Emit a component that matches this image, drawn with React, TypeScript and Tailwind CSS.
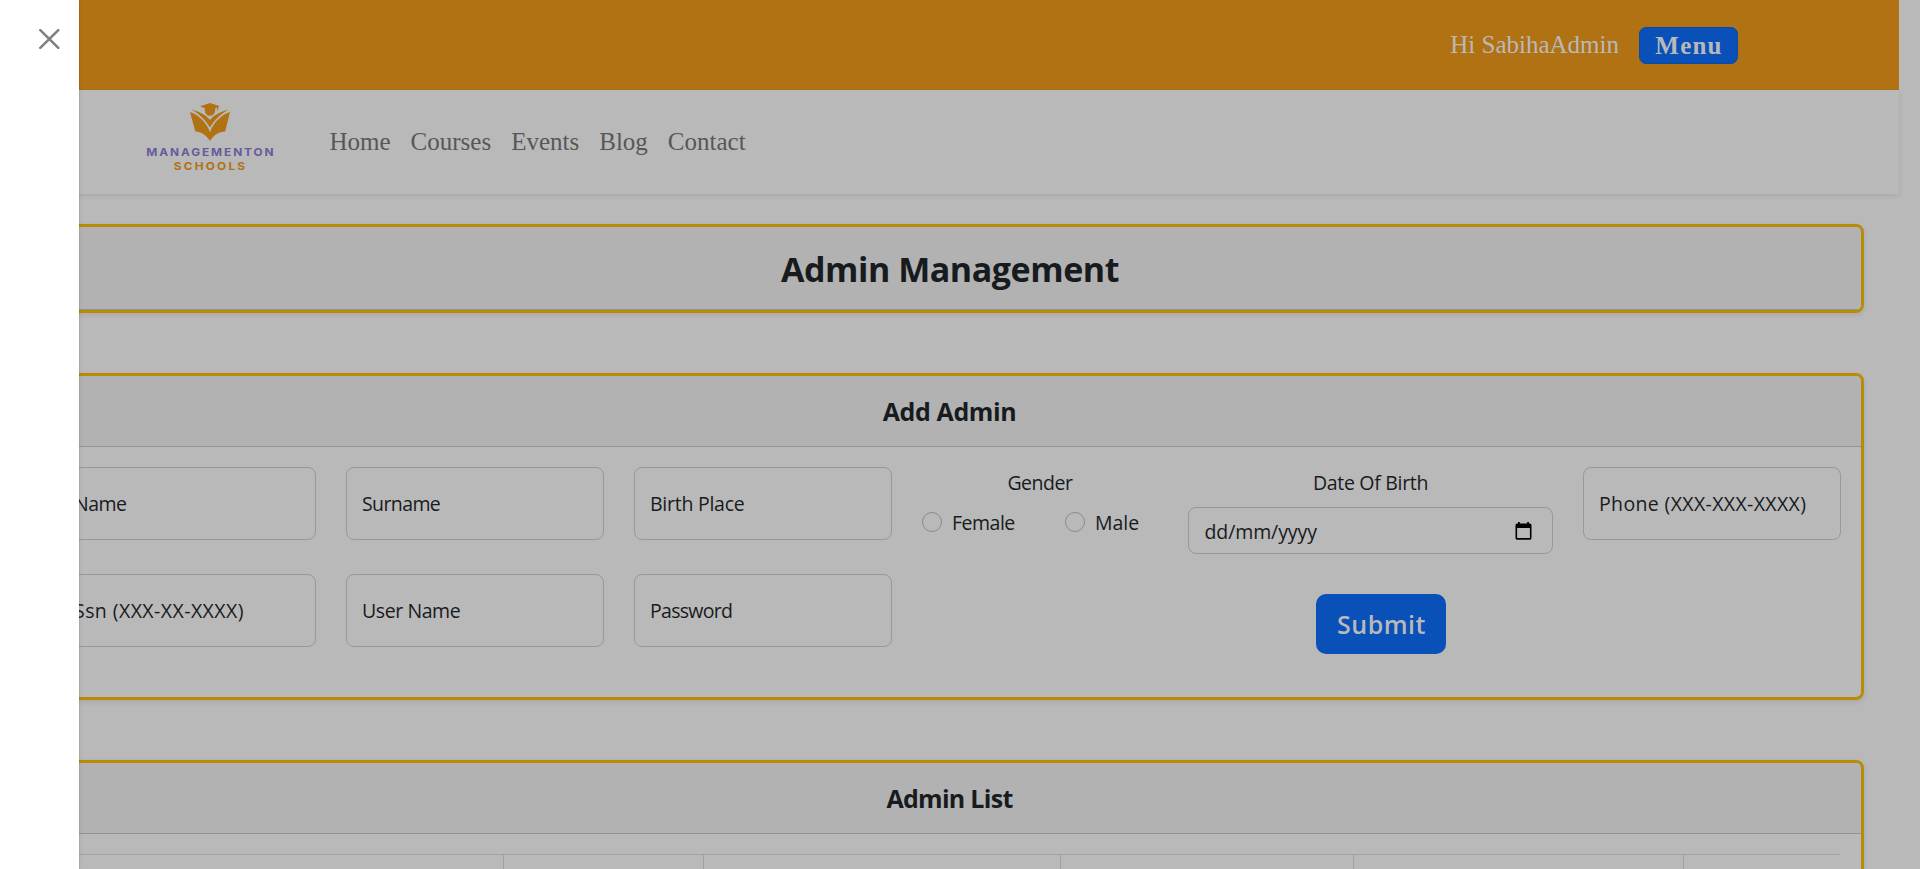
import type { ReactNode } from "react";

const NAV_LINKS = ["Home", "Courses", "Events", "Blog", "Contact"];

function Logo() {
  return (
    <div className="flex w-[140px] flex-col items-center pt-[13px] font-['Inter',sans-serif] text-[11px] leading-[14px] font-bold">
      <svg width="40" height="38" viewBox="0 0 40 38" className="mb-1" fill="#b17213">
        <path d="M20 0 L30 3.300 L28.200 4 V7.600 H27.200 V4.400 L25.200 5.200 V7.500 A5.200 5.200 0 0 1 14.800 7.500 V5.200 L10 3.300 Z" />
        <path d="M1.200 6.200 C9 8.500 15.500 11.500 20 17 C24.500 11.500 31 8.500 38.800 6.200 C31 11 24.500 16.500 20 24.500 C15.500 16.500 9 11 1.200 6.200 Z" />
        <path d="M0 9 C8 11.500 17 19.500 20 29.500 C23 19.500 32 11.500 40 9 L35.200 28.500 C29 28.500 24 32 20 38 C16 32 11 28.500 5.300 28.500 Z" />
      </svg>
      <span className="scale-x-[1.08] pl-[1px] tracking-[1.750px] whitespace-nowrap text-[#665b9b]">MANAGEMENTON</span>
      <span className="scale-x-[1.08] pl-[1.5px] tracking-[2px] whitespace-nowrap text-[#b17213]">SCHOOLS</span>
    </div>
  );
}

type CardProps = { title: string; titleClass: string; children?: ReactNode };

function Card({ title, titleClass, children }: CardProps) {
  return (
    <section className="overflow-hidden rounded-[8px] border-[3px] border-[#b98c05] shadow-[0_2px_5px_rgba(0,0,0,0.09)]">
      <h2 className={`flex items-center justify-center border-b border-[#929292] bg-[#b2b2b2] font-bold text-[#181b1e] ${titleClass}`}>
        {title}
      </h2>
      {children}
    </section>
  );
}

function Field({ label, spacing }: { label: string; spacing: string }) {
  return (
    <div className="flex h-[73px] items-center rounded-[8px] border border-[#959a9e] px-[15px] whitespace-nowrap">
      <span className={spacing}>{label}</span>
    </div>
  );
}

function Radio() {
  return <span className="mr-2.5 h-5 w-5 rounded-full border border-[#8a8a8a]" />;
}

function CalendarIcon() {
  return (
    <svg width="17" height="18" viewBox="0 0 17 18" fill="#000">
      <path
        fillRule="evenodd"
        d="M3 0 H4.800 V1.600 H12.200 V0 H14 V1.600 H15 A1.700 1.700 0 0 1 16.500 3.300 V16 A1.700 1.700 0 0 1 15 17.700 H2 A1.700 1.700 0 0 1 .5 16 V3.300 A1.700 1.700 0 0 1 2 1.600 H3 Z M2.100 6 V16.100 H14.900 V6 Z"
      />
    </svg>
  );
}

export default function App() {
  return (
    <div className="relative h-[869px] w-full overflow-hidden bg-[#b9b9b9] font-['Open_Sans','Noto_Sans',sans-serif] text-[19.5px] text-[#181b1e]">
      <div className="w-[1899px]">
        <div className="flex h-[90px] items-center justify-end gap-5 bg-[#b17213] pr-[161px] font-['Liberation_Serif',serif] text-[25px] text-[#b9b9b9]">
          <span>Hi SabihaAdmin</span>
          <button className="mt-px flex h-[37px] w-[99px] items-center justify-center rounded-[7px] border border-[#0d4aa3] bg-[#0a50b9] pl-px font-bold tracking-[1.2px]">
            Menu
          </button>
        </div>
        <nav className="flex h-[104px] bg-[#b9b9b9] pl-[140px] shadow-[0_2px_5px_rgba(0,0,0,0.09)]">
          <Logo />
          <div className="ml-[49.5px] flex items-center gap-5 font-['Liberation_Serif',serif] text-[25px] text-[#575757]">
            {NAV_LINKS.map((link) => (
              <a key={link}>{link}</a>
            ))}
          </div>
        </nav>

        <main className="flex flex-col pt-[30px] pr-[35px] pl-[35px]">
          <Card title="Admin Management" titleClass="h-[83px] pt-[3px] pl-px text-[34px] tracking-[-0.45px]" />
          <div className="h-[60px]" />
          <Card title="Add Admin" titleClass="h-[71px] pt-0.5 text-[25px] tracking-[-0.4px]">
            <div className="grid h-[250px] grid-cols-[258px_258px_258px_236px_365px_258px] grid-rows-[87px_87px] gap-x-[30px] gap-y-5 p-5">
              <Field label="Name" spacing="tracking-[-0.5px]" />
              <Field label="Surname" spacing="tracking-[-0.6px]" />
              <Field label="Birth Place" spacing="tracking-[-0.25px]" />
              <div>
                <div className="mb-[9px] h-[31px] text-center leading-[31px] tracking-[-0.45px]">Gender</div>
                <div className="flex h-[30px] items-center">
                  <div className="flex w-[143px] items-center tracking-[-0.5px]">
                    <Radio />
                    <span className="pt-0.5">Female</span>
                  </div>
                  <div className="flex items-center">
                    <Radio />
                    <span className="pt-0.5">Male</span>
                  </div>
                </div>
              </div>
              <div>
                <div className="mb-[9px] h-[31px] text-center leading-[31px] tracking-[-0.3px]">Date Of Birth</div>
                <div className="flex h-[47px] items-center justify-between rounded-[8px] border border-[#959a9e] pr-5 pl-[15.5px]">
                  <span className="pt-[3px] tracking-[-0.1px]">dd/mm/yyyy</span>
                  <CalendarIcon />
                </div>
              </div>
              <Field label="Phone (XXX-XXX-XXXX)" spacing="tracking-[0.36px]" />
              <Field label="Ssn (XXX-XX-XXXX)" spacing="tracking-[0.44px]" />
              <Field label="User Name" spacing="tracking-[-0.42px]" />
              <Field label="Password" spacing="tracking-[-0.7px]" />
              <div className="col-span-3 flex justify-center pt-5 pr-0.5">
                <button className="h-[60px] w-[130px] rounded-[10px] bg-[#0a50b9] pt-0.5 pl-0.5 text-[25px] font-semibold tracking-[0.5px] text-[#b9b9b9]">
                  Submit
                </button>
              </div>
            </div>
          </Card>
          <div className="h-[60px]" />
          <Card title="Admin List" titleClass="h-[71px] pt-0.5 text-[25px] tracking-[-0.7px]">
            <div className="h-[100px] py-5 pr-[21px] pl-5">
              <div className="grid h-full grid-cols-[446px_200px_357px_293px_330px_156px] border-t border-[#a0a3a6]">
                <div className="border-r border-[#a0a3a6]" />
                <div className="border-r border-[#a0a3a6]" />
                <div className="border-r border-[#a0a3a6]" />
                <div className="border-r border-[#a0a3a6]" />
                <div className="border-r border-[#a0a3a6]" />
                <div />
              </div>
            </div>
          </Card>
        </main>
      </div>

      <aside className="absolute top-0 left-0 h-full w-[80px] border-r border-black/5 bg-white bg-clip-padding shadow-[0_2px_4px_rgba(0,0,0,0.06)]">
        <button aria-label="Close" className="absolute top-[29px] left-[39px]">
          <svg width="21" height="20" viewBox="0 0 21 20" fill="none" stroke="#7f7f7f" strokeWidth="2.500" strokeLinecap="round">
            <path d="M1.300 1.200 L19.300 18.800 M19.300 1.200 L1.300 18.800" />
          </svg>
        </button>
      </aside>
    </div>
  );
}
